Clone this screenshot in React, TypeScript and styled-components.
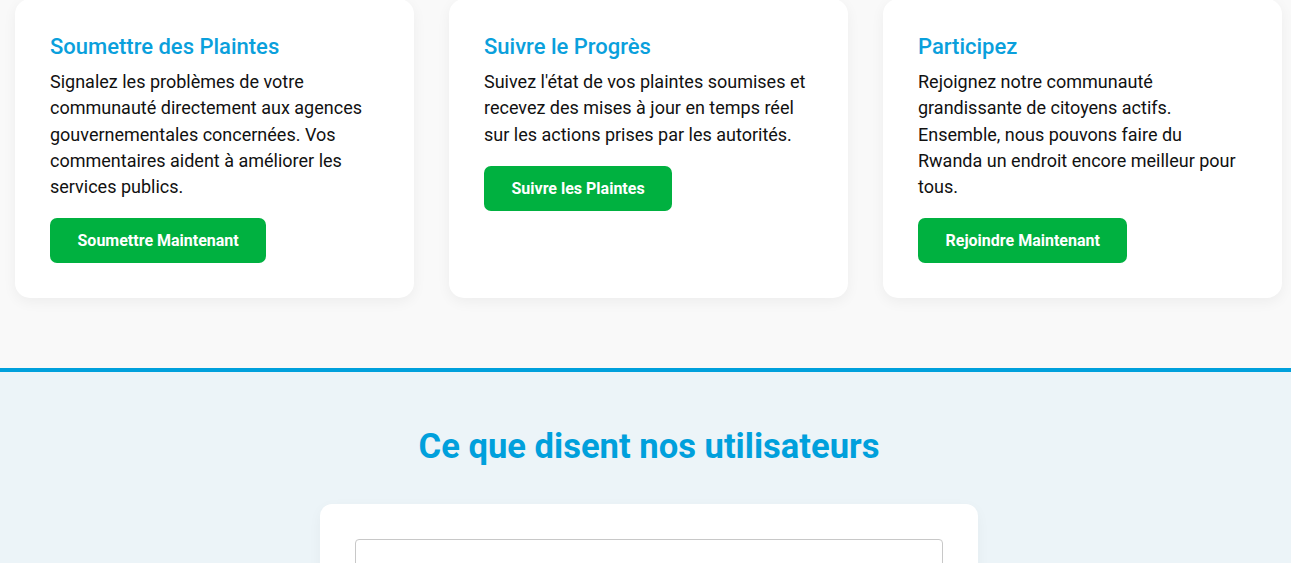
import React from "react";
import styled, { createGlobalStyle } from "styled-components";

const GlobalStyle = createGlobalStyle`
  html, body {
    margin: 0;
    padding: 0;
    background: #f9f9f9;
    font-family: Roboto, "Liberation Sans", Arial, sans-serif;
    overflow: hidden;
  }
  * { box-sizing: border-box; }
`;

const Features = styled.section`
  background: #f9f9f9;
  padding: 0 0 70px 15px;
  margin-top: -1px;
`;

const CardGrid = styled.div`
  display: grid;
  grid-template-columns: repeat(3, 399px);
  column-gap: 35px;
`;

const Card = styled.div`
  background: #ffffff;
  border-radius: 15px;
  padding: 35px 35px 35px;
  box-shadow: 0 4px 14px rgba(0, 0, 0, 0.05);
  display: flex;
  flex-direction: column;
  align-items: flex-start;
`;

const CardTitle = styled.h3`
  margin: 0 0 9px;
  font-size: 22px;
  line-height: 26px;
  font-weight: 500;
  color: #0aa0dc;
`;

const CardText = styled.p`
  margin: 0 0 18px;
  font-size: 18px;
  line-height: 26.25px;
  color: #111;
`;

const Button = styled.button`
  border: none;
  background: #00b140;
  color: #fff;
  font-family: inherit;
  font-weight: 700;
  font-size: 16px;
  border-radius: 7px;
  padding: 0 27.5px;
  height: 45px;
  cursor: pointer;
`;

const Testimonials = styled.section`
  background: #ecf4f8;
  border-top: 4px solid #00a0dc;
  padding: 54px 0 0 7px;
  display: flex;
  flex-direction: column;
  align-items: center;
  min-height: 400px;
`;

const SectionTitle = styled.h2`
  margin: 0 0 38px;
  font-size: 34.6px;
  line-height: 40px;
  font-weight: 700;
  color: #00a0dc;
`;

const TestimonialCard = styled.div`
  width: 658px;
  background: #fff;
  border-radius: 12px;
  padding: 35px;
  box-shadow: 0 4px 14px rgba(0, 0, 0, 0.04);
`;

const TextArea = styled.textarea`
  display: block;
  width: 100%;
  height: 120px;
  border: 1px solid #c8c8c8;
  border-radius: 4px;
  resize: none;
  font-family: inherit;
`;

const features = [
  {
    title: "Soumettre des Plaintes",
    text: "Signalez les problèmes de votre communauté directement aux agences gouvernementales concernées. Vos commentaires aident à améliorer les services publics.",
    action: "Soumettre Maintenant",
  },
  {
    title: "Suivre le Progrès",
    text: "Suivez l'état de vos plaintes soumises et recevez des mises à jour en temps réel sur les actions prises par les autorités.",
    action: "Suivre les Plaintes",
  },
  {
    title: "Participez",
    text: "Rejoignez notre communauté grandissante de citoyens actifs. Ensemble, nous pouvons faire du Rwanda un endroit encore meilleur pour tous.",
    action: "Rejoindre Maintenant",
  },
];

export default function App() {
  return (
    <>
      <GlobalStyle />
      <Features>
        <CardGrid>
          {features.map((f) => (
            <Card key={f.title}>
              <CardTitle>{f.title}</CardTitle>
              <CardText>{f.text}</CardText>
              <Button>{f.action}</Button>
            </Card>
          ))}
        </CardGrid>
      </Features>
      <Testimonials>
        <SectionTitle>Ce que disent nos utilisateurs</SectionTitle>
        <TestimonialCard>
          <TextArea aria-label="Témoignage" />
        </TestimonialCard>
      </Testimonials>
    </>
  );
}
